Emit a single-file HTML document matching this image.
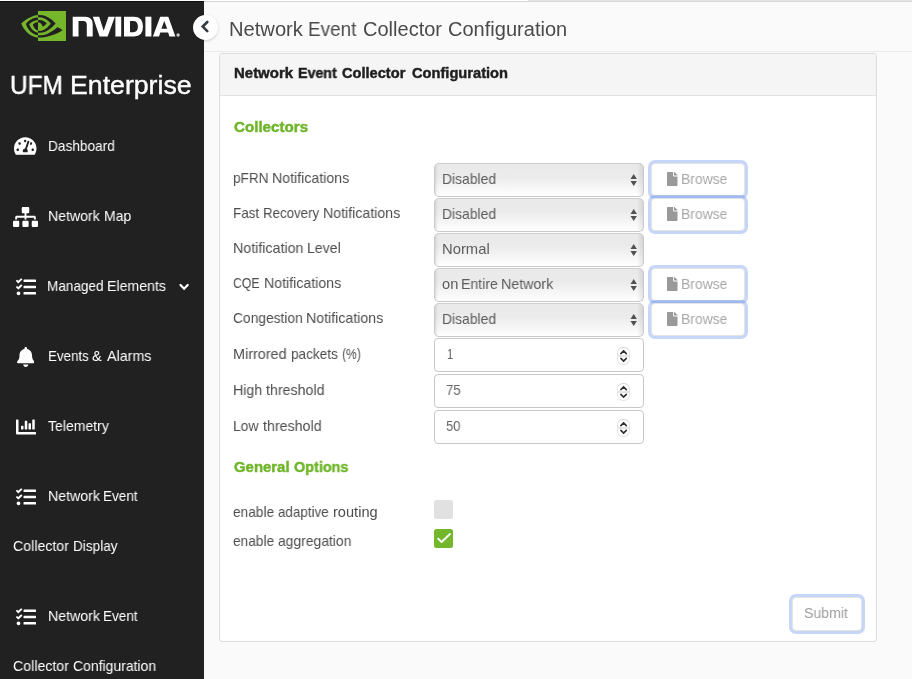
<!DOCTYPE html>
<html>
<head>
<meta charset="utf-8">
<title>Network Event Collector Configuration</title>
<style>
*{box-sizing:border-box;margin:0;padding:0}
html,body{width:912px;height:679px;overflow:hidden;background:#fafafa;font-family:"Liberation Sans",sans-serif;}
.abs{position:absolute}
.t{position:absolute;white-space:nowrap;transform-origin:0 50%;line-height:1;will-change:transform}
#side{position:absolute;left:0;top:0;width:204px;height:679px;background:#212121}
#topbar{position:absolute;left:204px;top:0;width:708px;height:52px;background:#fafafa;border-bottom:1px solid #ebebeb}
#topline{position:absolute;left:0;top:0;width:912px;height:1px;background:linear-gradient(90deg,#fff 528px,#e3e3e3 528px)}
#topline2{position:absolute;left:0;top:1px;width:912px;height:1px;background:linear-gradient(90deg,#0c0c0c 204px,#d8d8d8 204px)}
#card{position:absolute;left:219px;top:53px;width:658px;height:589px;background:#fff;border:1px solid #dcdcdc;border-radius:3px}
#cardhead{position:absolute;left:0;top:0;width:656px;height:42px;background:#f5f5f5;border-bottom:1px solid #e0e0e0;border-radius:2px 2px 0 0}
.sel{position:absolute;left:434px;width:210px;height:34px;border:1px solid #c9c9c9;border-top-color:#cecece;border-radius:5px;background:linear-gradient(90deg,rgba(0,0,0,.13),rgba(0,0,0,.03) 3px,rgba(0,0,0,0) 5px,rgba(0,0,0,0) 203px,rgba(0,0,0,.03) 205px,rgba(0,0,0,.10)),linear-gradient(#e9e9e9,#ebebeb 40%,#fefefe 95%);background-origin:border-box}
.num{position:absolute;left:434px;width:210px;height:34px;border:1px solid #c8c8c8;border-radius:4px;background:#fff}
.spin{position:absolute;left:182px;top:8px;width:13px;height:18px;border:1px solid #e6e6e6;border-top-color:#d4d4d4;border-radius:6px;background:linear-gradient(#fff 46%,#e6e6e6 46%,#e6e6e6 54%,#fff 54%)}
.br{position:absolute;left:651px;width:94px;height:33px;border:1px solid #e4e4e2;border-radius:4px;background:#fff;box-shadow:0 0 0 3px rgba(50,108,230,.28)}
#submit{position:absolute;left:792px;top:597px;width:70px;height:34px;border:1px solid #e4e4e2;border-radius:4px;background:#fff;box-shadow:0 0 0 3px rgba(50,108,230,.28)}
#toggle{position:absolute;left:192.9px;top:14.6px;width:25.2px;height:25.2px;border-radius:50%;background:#fff;box-shadow:0 1px 3px rgba(0,0,0,.18)}
.cb{position:absolute;left:434px;width:19px;height:19px;border-radius:2.5px}
</style>
</head>
<body>
<div id="side"></div>
<div id="topbar"></div>
<div id="topline"></div><div id="topline2"></div>
<div id="card"><div id="cardhead"></div></div>
<svg class="abs" style="left:0;top:0" width="204" height="52" viewBox="0 0 204 52">
<g transform="translate(21.3,3.35) scale(1.862,1.89)"><path fill="#75b62a" d="M8.948 8.798v-1.43a6.7 6.7 0 0 1 .424-.018c3.922-.124 6.493 3.374 6.493 3.374s-2.774 3.851-5.75 3.851c-.398 0-.787-.062-1.158-.185v-4.346c1.528.185 1.837.857 2.747 2.385l2.04-1.714s-1.492-1.952-4-1.952a6.016 6.016 0 0 0-.796.035m0-4.735v2.138l.424-.027c5.45-.185 9.01 4.47 9.01 4.47s-4.08 4.964-8.33 4.964c-.37 0-.733-.035-1.095-.097v1.325c.3.035.61.062.91.062 3.957 0 6.82-2.023 9.593-4.408.459.371 2.34 1.263 2.73 1.652-2.633 2.208-8.772 3.984-12.253 3.984-.335 0-.653-.018-.971-.053v1.864H24V4.063zm0 10.326v1.131c-3.657-.654-4.673-4.46-4.673-4.46s1.758-1.944 4.673-2.262v1.237H8.94c-1.528-.186-2.73 1.245-2.73 1.245s.68 2.412 2.739 3.11M2.456 10.9s2.164-3.197 6.5-3.533V6.201C4.153 6.59 0 10.653 0 10.653s2.35 6.802 8.948 7.42v-1.237c-4.84-.6-6.492-5.936-6.492-5.936z"/></g>
<g fill="#fff">
<path d="M72.7 36.5V16.7H85.2Q92.7 16.7 92.7 24.2V36.5H86.8V24.8Q86.8 21 83.3 21H78.5V36.5Z"/>
<path d="M92.8 16.7H99.2L103.7 30.8L108.4 16.7H114.9L107.6 36.5H99.6Z"/>
<rect x="115.4" y="16.7" width="5.8" height="19.8"/>
<path fill-rule="evenodd" d="M124 16.7H134Q143 16.7 143 26.6Q143 36.5 134 36.5H124ZM130 21V32.2H133.3Q137.9 32.2 137.9 26.6Q137.9 21 133.3 21Z"/>
<rect x="145.4" y="16.7" width="6" height="19.8"/>
<path fill-rule="evenodd" d="M152.9 36.5L160.2 16.7H168.3L175.4 36.5H169.4L168.2 32.6H160.3L159 36.5ZM161.4 28.7H167.2L164.25 20.9Z"/>
<circle cx="178.1" cy="35" r="1.7" fill="#c8c8c8"/>
</g></svg>
<div id="toggle"></div>
<svg class="abs" style="left:192px;top:14px" width="28" height="28" viewBox="192 14 28 28"><path fill="none" stroke="#353b42" stroke-width="2.6" stroke-linecap="round" stroke-linejoin="miter" d="M207.3 22L202.7 26.6L207.3 31.2"/></svg>
<svg class="abs" style="left:14px;top:136.3px" width="22.500" height="20" viewBox="0 0 576 512"><path fill="#fff" d="M288 32C128.94 32 0 160.94 0 320c0 52.8 14.25 102.26 39.06 144.8 5.61 9.62 16.3 15.2 27.44 15.2h443c11.14 0 21.83-5.58 27.44-15.2C561.75 422.26 576 372.8 576 320c0-159.06-128.94-288-288-288zm0 64c14.71 0 26.58 10.13 30.32 23.65-1.11 2.26-2.64 4.23-3.45 6.67l-9.22 27.67c-5.13 3.49-10.97 6.01-17.64 6.01-17.67 0-32-14.33-32-32S270.33 96 288 96zM96 384c-17.67 0-32-14.33-32-32s14.33-32 32-32 32 14.33 32 32-14.33 32-32 32zm48-160c-17.67 0-32-14.33-32-32s14.33-32 32-32 32 14.33 32 32-14.33 32-32 32zm246.77-72.41l-61.33 184C343.13 347.33 352 364.54 352 384c0 11.72-3.38 22.55-8.88 32H232.88c-5.5-9.45-8.88-20.28-8.88-32 0-33.94 26.5-61.43 59.9-63.59l61.34-184.01c4.17-12.56 17.73-19.45 30.36-15.17 12.57 4.19 19.35 17.79 15.17 30.36zm14.66 57.2l15.52-46.55c3.47-1.29 7.13-2.23 11.05-2.23 17.67 0 32 14.33 32 32s-14.33 32-32 32c-11.38-.01-20.89-6.28-26.57-15.22zM480 384c-17.67 0-32-14.33-32-32s14.33-32 32-32 32 14.33 32 32-14.33 32-32 32z"/></svg>
<svg class="abs" style="left:12.8px;top:206.7px" width="25.000" height="20" viewBox="0 0 640 512"><path fill="#fff" d="M128 352H32c-17.67 0-32 14.33-32 32v96c0 17.67 14.33 32 32 32h96c17.67 0 32-14.33 32-32v-96c0-17.67-14.33-32-32-32zm-24-80h192v48h48v-48h192v48h48v-57.59c0-21.17-17.23-38.41-38.41-38.41H344v-64h40c17.67 0 32-14.33 32-32V32c0-17.67-14.33-32-32-32H256c-17.67 0-32 14.33-32 32v96c0 17.67 14.33 32 32 32h40v64H94.41C73.23 224 56 241.23 56 262.41V320h48v-48zm264 80h-96c-17.67 0-32 14.33-32 32v96c0 17.67 14.33 32 32 32h96c17.67 0 32-14.33 32-32v-96c0-17.67-14.33-32-32-32zm240 0h-96c-17.67 0-32 14.33-32 32v96c0 17.67 14.33 32 32 32h96c17.67 0 32-14.33 32-32v-96c0-17.67-14.33-32-32-32z"/></svg>
<svg class="abs" style="left:15.9px;top:276.9px" width="20.000" height="20" viewBox="0 0 512 512"><path fill="#fff" d="M139.61 35.5a12 12 0 0 0-17 0L58.93 98.81l-22.7-22.12a12 12 0 0 0-17 0L3.53 92.41a12 12 0 0 0 0 17l47.59 47.4a12.78 12.78 0 0 0 17.61 0l15.59-15.62L156.52 69a12.09 12.09 0 0 0 .09-17zm0 159.19a12 12 0 0 0-17 0l-63.68 63.72-22.7-22.1a12 12 0 0 0-17 0L3.53 252a12 12 0 0 0 0 17L51 316.5a12.77 12.77 0 0 0 17.6 0l15.7-15.69 72.2-72.22a12 12 0 0 0 .09-16.9zM64 368c-26.49 0-48.59 21.5-48.59 48S37.53 464 64 464a48 48 0 0 0 0-96zm432 16H208a16 16 0 0 0-16 16v32a16 16 0 0 0 16 16h288a16 16 0 0 0 16-16v-32a16 16 0 0 0-16-16zm0-320H208a16 16 0 0 0-16 16v32a16 16 0 0 0 16 16h288a16 16 0 0 0 16-16V80a16 16 0 0 0-16-16zm0 160H208a16 16 0 0 0-16 16v32a16 16 0 0 0 16 16h288a16 16 0 0 0 16-16v-32a16 16 0 0 0-16-16z"/></svg>
<svg class="abs" style="left:174px;top:277px" width="20" height="20" viewBox="174 277 20 20"><path fill="none" stroke="#fff" stroke-width="2.2" stroke-linecap="round" stroke-linejoin="miter" d="M180.5 285L184.1 288.7L187.7 285"/></svg>
<svg class="abs" style="left:16.8px;top:346.8px" width="17.500" height="20" viewBox="0 0 448 512"><path fill="#fff" d="M224 512c35.32 0 63.97-28.65 63.97-64H160.03c0 35.35 28.65 64 63.97 64zm215.39-149.71c-19.32-20.76-55.47-51.99-55.47-154.29 0-77.7-54.48-139.9-127.94-155.16V32c0-17.67-14.32-32-31.98-32s-31.98 14.33-31.98 32v20.84C118.56 68.1 64.08 130.3 64.08 208c0 102.3-36.15 133.53-55.47 154.29-6 6.45-8.66 14.16-8.61 21.71.11 16.4 12.98 32 32.1 32h383.8c19.12 0 32-15.6 32.1-32 .05-7.55-2.61-15.27-8.61-21.71z"/></svg>
<svg class="abs" style="left:15.9px;top:416.6px" width="20.000" height="20" viewBox="0 0 512 512"><path fill="#fff" d="M332.8 320h38.4c6.4 0 12.8-6.4 12.8-12.8V172.8c0-6.4-6.4-12.8-12.8-12.8h-38.4c-6.4 0-12.8 6.4-12.8 12.8v134.4c0 6.4 6.4 12.8 12.8 12.8zm96 0h38.4c6.4 0 12.8-6.4 12.8-12.8V76.8c0-6.4-6.4-12.8-12.8-12.8h-38.4c-6.4 0-12.8 6.4-12.8 12.8v230.4c0 6.4 6.4 12.8 12.8 12.8zm-288 0h38.4c6.4 0 12.8-6.4 12.8-12.8v-70.4c0-6.4-6.4-12.8-12.8-12.8h-38.4c-6.4 0-12.8 6.4-12.8 12.8v70.4c0 6.4 6.4 12.8 12.8 12.8zm96 0h38.4c6.4 0 12.8-6.4 12.8-12.8V108.8c0-6.4-6.4-12.8-12.8-12.8h-38.4c-6.4 0-12.8 6.4-12.8 12.8v198.4c0 6.4 6.4 12.8 12.8 12.8zM496 384H64V80c0-8.84-7.16-16-16-16H16C7.16 64 0 71.16 0 80v336c0 17.67 14.33 32 32 32h464c8.84 0 16-7.16 16-16v-32c0-8.84-7.16-16-16-16z"/></svg>
<svg class="abs" style="left:15.9px;top:486.9px" width="20.000" height="20" viewBox="0 0 512 512"><path fill="#fff" d="M139.61 35.5a12 12 0 0 0-17 0L58.93 98.81l-22.7-22.12a12 12 0 0 0-17 0L3.53 92.41a12 12 0 0 0 0 17l47.59 47.4a12.78 12.78 0 0 0 17.61 0l15.59-15.62L156.52 69a12.09 12.09 0 0 0 .09-17zm0 159.19a12 12 0 0 0-17 0l-63.68 63.72-22.7-22.1a12 12 0 0 0-17 0L3.53 252a12 12 0 0 0 0 17L51 316.5a12.77 12.77 0 0 0 17.6 0l15.7-15.69 72.2-72.22a12 12 0 0 0 .09-16.9zM64 368c-26.49 0-48.59 21.5-48.59 48S37.53 464 64 464a48 48 0 0 0 0-96zm432 16H208a16 16 0 0 0-16 16v32a16 16 0 0 0 16 16h288a16 16 0 0 0 16-16v-32a16 16 0 0 0-16-16zm0-320H208a16 16 0 0 0-16 16v32a16 16 0 0 0 16 16h288a16 16 0 0 0 16-16V80a16 16 0 0 0-16-16zm0 160H208a16 16 0 0 0-16 16v32a16 16 0 0 0 16 16h288a16 16 0 0 0 16-16v-32a16 16 0 0 0-16-16z"/></svg>
<svg class="abs" style="left:15.9px;top:606.9px" width="20.000" height="20" viewBox="0 0 512 512"><path fill="#fff" d="M139.61 35.5a12 12 0 0 0-17 0L58.93 98.81l-22.7-22.12a12 12 0 0 0-17 0L3.53 92.41a12 12 0 0 0 0 17l47.59 47.4a12.78 12.78 0 0 0 17.61 0l15.59-15.62L156.52 69a12.09 12.09 0 0 0 .09-17zm0 159.19a12 12 0 0 0-17 0l-63.68 63.72-22.7-22.1a12 12 0 0 0-17 0L3.53 252a12 12 0 0 0 0 17L51 316.5a12.77 12.77 0 0 0 17.6 0l15.7-15.69 72.2-72.22a12 12 0 0 0 .09-16.9zM64 368c-26.49 0-48.59 21.5-48.59 48S37.53 464 64 464a48 48 0 0 0 0-96zm432 16H208a16 16 0 0 0-16 16v32a16 16 0 0 0 16 16h288a16 16 0 0 0 16-16v-32a16 16 0 0 0-16-16zm0-320H208a16 16 0 0 0-16 16v32a16 16 0 0 0 16 16h288a16 16 0 0 0 16-16V80a16 16 0 0 0-16-16zm0 160H208a16 16 0 0 0-16 16v32a16 16 0 0 0 16 16h288a16 16 0 0 0 16-16v-32a16 16 0 0 0-16-16z"/></svg>
<div class="sel" style="top:163px"><svg class="abs" style="left:189px;top:4px" width="18" height="24" viewBox="190 5 18 24"><path fill="#505050" d="M199.7 10.9L202.9 16H196.5ZM199.7 23.1L196.5 18H202.9Z"/></svg></div>
<div class="sel" style="top:198px"><svg class="abs" style="left:189px;top:4px" width="18" height="24" viewBox="190 5 18 24"><path fill="#505050" d="M199.7 10.9L202.9 16H196.5ZM199.7 23.1L196.5 18H202.9Z"/></svg></div>
<div class="sel" style="top:233px"><svg class="abs" style="left:189px;top:4px" width="18" height="24" viewBox="190 5 18 24"><path fill="#505050" d="M199.7 10.9L202.9 16H196.5ZM199.7 23.1L196.5 18H202.9Z"/></svg></div>
<div class="sel" style="top:268px"><svg class="abs" style="left:189px;top:4px" width="18" height="24" viewBox="190 5 18 24"><path fill="#505050" d="M199.7 10.9L202.9 16H196.5ZM199.7 23.1L196.5 18H202.9Z"/></svg></div>
<div class="sel" style="top:303px"><svg class="abs" style="left:189px;top:4px" width="18" height="24" viewBox="190 5 18 24"><path fill="#505050" d="M199.7 10.9L202.9 16H196.5ZM199.7 23.1L196.5 18H202.9Z"/></svg></div>

<div class="num" style="top:338px"><div class="spin"></div><svg class="abs" style="left:179px;top:4px" width="20" height="24" viewBox="180 5 20 24"><path fill="none" stroke="#2e2e2e" stroke-width="1.6" stroke-linecap="round" stroke-linejoin="miter" d="M186.9 15.6L189.6 12.9L192.3 15.6M186.9 20.4L189.6 23.1L192.3 20.4"/></svg></div>
<div class="num" style="top:374px"><div class="spin"></div><svg class="abs" style="left:179px;top:4px" width="20" height="24" viewBox="180 5 20 24"><path fill="none" stroke="#2e2e2e" stroke-width="1.6" stroke-linecap="round" stroke-linejoin="miter" d="M186.9 15.6L189.6 12.9L192.3 15.6M186.9 20.4L189.6 23.1L192.3 20.4"/></svg></div>
<div class="num" style="top:410px"><div class="spin"></div><svg class="abs" style="left:179px;top:4px" width="20" height="24" viewBox="180 5 20 24"><path fill="none" stroke="#2e2e2e" stroke-width="1.6" stroke-linecap="round" stroke-linejoin="miter" d="M186.9 15.6L189.6 12.9L192.3 15.6M186.9 20.4L189.6 23.1L192.3 20.4"/></svg></div>

<div class="br" style="top:163px"></div><svg class="abs" style="left:667.3px;top:171.9px" width="10.500" height="14" viewBox="0 0 384 512"><path fill="#999" d="M224 136V0H24C10.7 0 0 10.7 0 24v464c0 13.3 10.7 24 24 24h336c13.3 0 24-10.7 24-24V160H248c-13.2 0-24-10.8-24-24zm160-14.1v6.1H256V0h6.1c6.4 0 12.500 2.5 17 7l97.9 98c4.5 4.5 7 10.6 7 16.9z"/></svg>
<div class="br" style="top:198px"></div><svg class="abs" style="left:667.3px;top:206.9px" width="10.500" height="14" viewBox="0 0 384 512"><path fill="#999" d="M224 136V0H24C10.7 0 0 10.7 0 24v464c0 13.3 10.7 24 24 24h336c13.3 0 24-10.7 24-24V160H248c-13.2 0-24-10.8-24-24zm160-14.1v6.1H256V0h6.1c6.4 0 12.500 2.5 17 7l97.9 98c4.5 4.5 7 10.6 7 16.9z"/></svg>
<div class="br" style="top:268px"></div><svg class="abs" style="left:667.3px;top:276.9px" width="10.500" height="14" viewBox="0 0 384 512"><path fill="#999" d="M224 136V0H24C10.7 0 0 10.7 0 24v464c0 13.3 10.7 24 24 24h336c13.3 0 24-10.7 24-24V160H248c-13.2 0-24-10.8-24-24zm160-14.1v6.1H256V0h6.1c6.4 0 12.500 2.5 17 7l97.9 98c4.5 4.5 7 10.6 7 16.9z"/></svg>
<div class="br" style="top:303px"></div><svg class="abs" style="left:667.3px;top:311.9px" width="10.500" height="14" viewBox="0 0 384 512"><path fill="#999" d="M224 136V0H24C10.7 0 0 10.7 0 24v464c0 13.3 10.7 24 24 24h336c13.3 0 24-10.7 24-24V160H248c-13.2 0-24-10.8-24-24zm160-14.1v6.1H256V0h6.1c6.4 0 12.500 2.5 17 7l97.9 98c4.5 4.5 7 10.6 7 16.9z"/></svg>

<div id="submit"></div>
<div class="cb" style="top:500px;background:#e1e1e1"></div>
<div class="cb" style="top:529px;background:#74b72c"><svg class="abs" style="left:0;top:0" width="19" height="19" viewBox="0 0 19 19"><path fill="none" stroke="#fff" stroke-width="1.8" stroke-linecap="round" stroke-linejoin="round" d="M4.2 9.6L7.6 13L16 5"/></svg></div>
<div class="t" style="left:10.15px;top:72.54px;font-size:25px;font-weight:400;color:#ffffff;-webkit-text-stroke:0.4px #fff;transform:scaleX(0.9760)">UFM</div>
<div class="t" style="left:69.87px;top:72.54px;font-size:25px;font-weight:400;color:#ffffff;-webkit-text-stroke:0.4px #fff;transform:scaleX(1.0673)">Enterprise</div>
<div class="t" style="left:48.03px;top:138.94px;font-size:14.6px;font-weight:400;color:#ffffff;transform:scaleX(0.9357)">Dashboard</div>
<div class="t" style="left:47.79px;top:208.94px;font-size:14.6px;font-weight:400;color:#ffffff;transform:scaleX(0.9665)">Network</div>
<div class="t" style="left:103.60px;top:208.94px;font-size:14.6px;font-weight:400;color:#ffffff;transform:scaleX(0.9585)">Map</div>
<div class="t" style="left:47.44px;top:279.14px;font-size:14.6px;font-weight:400;color:#ffffff;transform:scaleX(0.9294)">Managed</div>
<div class="t" style="left:107.29px;top:279.14px;font-size:14.6px;font-weight:400;color:#ffffff;transform:scaleX(0.9695)">Elements</div>
<div class="t" style="left:47.86px;top:348.94px;font-size:14.6px;font-weight:400;color:#ffffff;transform:scaleX(0.9146)">Events</div>
<div class="t" style="left:92.40px;top:348.94px;font-size:14.6px;font-weight:400;color:#ffffff;transform:scaleX(1.0000)">&amp;</div>
<div class="t" style="left:106.50px;top:348.94px;font-size:14.6px;font-weight:400;color:#ffffff;transform:scaleX(0.9800)">Alarms</div>
<div class="t" style="left:47.66px;top:418.94px;font-size:14.6px;font-weight:400;color:#ffffff;transform:scaleX(0.9610)">Telemetry</div>
<div class="t" style="left:47.69px;top:488.64px;font-size:14.6px;font-weight:400;color:#ffffff;transform:scaleX(0.9703)">Network</div>
<div class="t" style="left:103.34px;top:488.64px;font-size:14.6px;font-weight:400;color:#ffffff;transform:scaleX(0.9250)">Event</div>
<div class="t" style="left:12.87px;top:539.04px;font-size:14.6px;font-weight:400;color:#ffffff;transform:scaleX(0.9717)">Collector</div>
<div class="t" style="left:72.64px;top:539.04px;font-size:14.6px;font-weight:400;color:#ffffff;transform:scaleX(0.9312)">Display</div>
<div class="t" style="left:47.69px;top:608.64px;font-size:14.6px;font-weight:400;color:#ffffff;transform:scaleX(0.9703)">Network</div>
<div class="t" style="left:103.34px;top:608.64px;font-size:14.6px;font-weight:400;color:#ffffff;transform:scaleX(0.9250)">Event</div>
<div class="t" style="left:12.87px;top:659.04px;font-size:14.6px;font-weight:400;color:#ffffff;transform:scaleX(0.9717)">Collector</div>
<div class="t" style="left:73.08px;top:659.04px;font-size:14.6px;font-weight:400;color:#ffffff;transform:scaleX(0.9576)">Configuration</div>
<div class="t" style="left:228.74px;top:19.88px;font-size:19.4px;font-weight:400;color:#4a4a4a;transform:scaleX(1.0388)">Network</div>
<div class="t" style="left:308.44px;top:19.88px;font-size:19.4px;font-weight:400;color:#4a4a4a;transform:scaleX(0.9729)">Event</div>
<div class="t" style="left:363.07px;top:19.88px;font-size:19.4px;font-weight:400;color:#4a4a4a;transform:scaleX(1.0326)">Collector</div>
<div class="t" style="left:448.27px;top:19.88px;font-size:19.4px;font-weight:400;color:#4a4a4a;transform:scaleX(1.0336)">Configuration</div>
<div class="t" style="left:233.87px;top:65.73px;font-size:14.5px;font-weight:700;color:#1f1f1f;-webkit-text-stroke:0.45px #1f1f1f;transform:scaleX(1.0321)">Network</div>
<div class="t" style="left:298.02px;top:65.73px;font-size:14.5px;font-weight:700;color:#1f1f1f;-webkit-text-stroke:0.45px #1f1f1f;transform:scaleX(0.9804)">Event</div>
<div class="t" style="left:342.00px;top:65.73px;font-size:14.5px;font-weight:700;color:#1f1f1f;-webkit-text-stroke:0.45px #1f1f1f;transform:scaleX(1.0081)">Collector</div>
<div class="t" style="left:411.69px;top:65.73px;font-size:14.5px;font-weight:700;color:#1f1f1f;-webkit-text-stroke:0.45px #1f1f1f;transform:scaleX(1.0101)">Configuration</div>
<div class="t" style="left:233.58px;top:119.64px;font-size:14.6px;font-weight:700;color:#6fb52a;-webkit-text-stroke:0.45px #6fb52a;transform:scaleX(1.0377)">Collectors</div>
<div class="t" style="left:232.97px;top:170.84px;font-size:14.6px;font-weight:400;color:#4d4d4d;transform:scaleX(0.9333)">pFRN</div>
<div class="t" style="left:272.19px;top:170.84px;font-size:14.6px;font-weight:400;color:#4d4d4d;transform:scaleX(0.9711)">Notifications</div>
<div class="t" style="left:233.15px;top:205.74px;font-size:14.6px;font-weight:400;color:#4d4d4d;transform:scaleX(0.9222)">Fast</div>
<div class="t" style="left:262.76px;top:205.74px;font-size:14.6px;font-weight:400;color:#4d4d4d;transform:scaleX(0.9112)">Recovery</div>
<div class="t" style="left:322.59px;top:205.74px;font-size:14.6px;font-weight:400;color:#4d4d4d;transform:scaleX(0.9711)">Notifications</div>
<div class="t" style="left:233.08px;top:240.74px;font-size:14.6px;font-weight:400;color:#4d4d4d;transform:scaleX(0.9757)">Notification</div>
<div class="t" style="left:307.29px;top:240.74px;font-size:14.6px;font-weight:400;color:#4d4d4d;transform:scaleX(0.9649)">Level</div>
<div class="t" style="left:233.27px;top:275.64px;font-size:14.6px;font-weight:400;color:#4d4d4d;transform:scaleX(0.8364)">CQE</div>
<div class="t" style="left:263.89px;top:275.64px;font-size:14.6px;font-weight:400;color:#4d4d4d;transform:scaleX(0.9711)">Notifications</div>
<div class="t" style="left:233.19px;top:310.74px;font-size:14.6px;font-weight:400;color:#4d4d4d;transform:scaleX(0.9458)">Congestion</div>
<div class="t" style="left:306.19px;top:310.74px;font-size:14.6px;font-weight:400;color:#4d4d4d;transform:scaleX(0.9711)">Notifications</div>
<div class="t" style="left:233.07px;top:346.74px;font-size:14.6px;font-weight:400;color:#4d4d4d;transform:scaleX(0.9865)">Mirrored</div>
<div class="t" style="left:290.57px;top:346.74px;font-size:14.6px;font-weight:400;color:#4d4d4d;transform:scaleX(0.9313)">packets</div>
<div class="t" style="left:342.07px;top:346.74px;font-size:14.6px;font-weight:400;color:#4d4d4d;transform:scaleX(0.8337)">(%)</div>
<div class="t" style="left:233.09px;top:382.74px;font-size:14.6px;font-weight:400;color:#4d4d4d;transform:scaleX(0.9694)">High</div>
<div class="t" style="left:265.66px;top:382.74px;font-size:14.6px;font-weight:400;color:#4d4d4d;transform:scaleX(0.9736)">threshold</div>
<div class="t" style="left:233.11px;top:418.74px;font-size:14.6px;font-weight:400;color:#4d4d4d;transform:scaleX(0.9529)">Low</div>
<div class="t" style="left:262.86px;top:418.74px;font-size:14.6px;font-weight:400;color:#4d4d4d;transform:scaleX(0.9753)">threshold</div>
<div class="t" style="left:233.79px;top:459.64px;font-size:14.6px;font-weight:700;color:#6fb52a;-webkit-text-stroke:0.45px #6fb52a;transform:scaleX(1.0218)">General</div>
<div class="t" style="left:294.21px;top:459.64px;font-size:14.6px;font-weight:700;color:#6fb52a;-webkit-text-stroke:0.45px #6fb52a;transform:scaleX(0.9870)">Options</div>
<div class="t" style="left:233.20px;top:504.64px;font-size:14.6px;font-weight:400;color:#4d4d4d;transform:scaleX(0.9388)">enable</div>
<div class="t" style="left:278.21px;top:504.64px;font-size:14.6px;font-weight:400;color:#4d4d4d;transform:scaleX(0.9191)">adaptive</div>
<div class="t" style="left:332.61px;top:504.64px;font-size:14.6px;font-weight:400;color:#4d4d4d;transform:scaleX(0.9918)">routing</div>
<div class="t" style="left:233.20px;top:533.64px;font-size:14.6px;font-weight:400;color:#4d4d4d;transform:scaleX(0.9388)">enable</div>
<div class="t" style="left:278.19px;top:533.64px;font-size:14.6px;font-weight:400;color:#4d4d4d;transform:scaleX(0.9523)">aggregation</div>
<div class="t" style="left:442.31px;top:171.64px;font-size:14.6px;font-weight:400;color:#5c5c5c;transform:scaleX(0.9523)">Disabled</div>
<div class="t" style="left:442.31px;top:206.64px;font-size:14.6px;font-weight:400;color:#5c5c5c;transform:scaleX(0.9523)">Disabled</div>
<div class="t" style="left:442.23px;top:241.64px;font-size:14.6px;font-weight:400;color:#5c5c5c;transform:scaleX(1.0145)">Normal</div>
<div class="t" style="left:442.30px;top:276.64px;font-size:14.6px;font-weight:400;color:#5c5c5c;transform:scaleX(1.0034)">on</div>
<div class="t" style="left:460.89px;top:276.64px;font-size:14.6px;font-weight:400;color:#5c5c5c;transform:scaleX(0.9655)">Entire</div>
<div class="t" style="left:501.18px;top:276.64px;font-size:14.6px;font-weight:400;color:#5c5c5c;transform:scaleX(0.9761)">Network</div>
<div class="t" style="left:442.31px;top:311.64px;font-size:14.6px;font-weight:400;color:#5c5c5c;transform:scaleX(0.9523)">Disabled</div>
<div class="t" style="left:446.55px;top:346.64px;font-size:14.6px;font-weight:400;color:#666666;transform:scaleX(0.7538)">1</div>
<div class="t" style="left:446.22px;top:382.64px;font-size:14.6px;font-weight:400;color:#666666;transform:scaleX(0.9085)">75</div>
<div class="t" style="left:446.23px;top:418.64px;font-size:14.6px;font-weight:400;color:#666666;transform:scaleX(0.8933)">50</div>
<div class="t" style="left:681.39px;top:171.81px;font-size:14.4px;font-weight:400;color:#a8a8a8;transform:scaleX(0.9652)">Browse</div>
<div class="t" style="left:681.39px;top:206.81px;font-size:14.4px;font-weight:400;color:#a8a8a8;transform:scaleX(0.9652)">Browse</div>
<div class="t" style="left:681.39px;top:276.81px;font-size:14.4px;font-weight:400;color:#a8a8a8;transform:scaleX(0.9652)">Browse</div>
<div class="t" style="left:681.39px;top:311.81px;font-size:14.4px;font-weight:400;color:#a8a8a8;transform:scaleX(0.9652)">Browse</div>
<div class="t" style="left:804.38px;top:605.74px;font-size:14.6px;font-weight:400;color:#9c9c9c;transform:scaleX(0.9663)">Submit</div>
</body>
</html>
